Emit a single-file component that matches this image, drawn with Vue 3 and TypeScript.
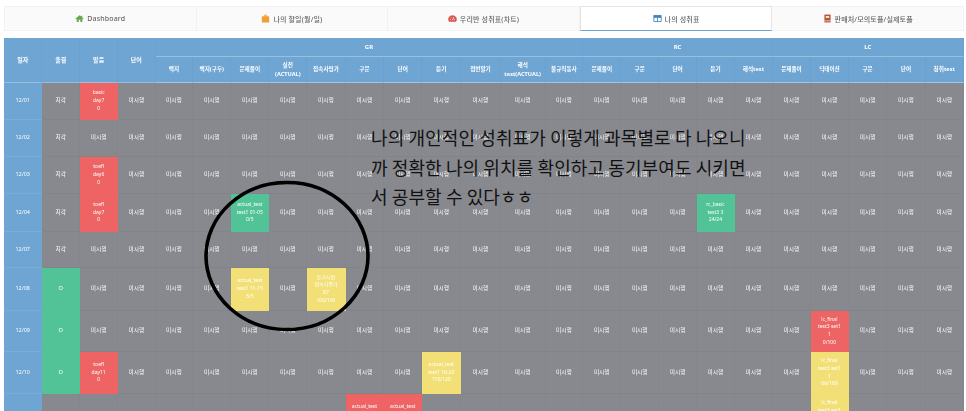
<script setup lang="ts">
interface Cell { text: string; tone: string }
interface Row { date: string; height: number; cells: Cell[] }
interface Head { label: string; cls: string }

const tabs = [
  { key: 'home', label: 'Dashboard', active: false },
  { key: 'case', label: '나의 할일(월/일)', active: false },
  { key: 'gauge', label: '우리반 성취표(차트)', active: false },
  { key: 'table', label: '나의 성취표', active: true },
  { key: 'book', label: '판매처/모의토플/실제토플', active: false },
]

const topHeads: Head[] = [
  { label: '일자', cls: 'rs' },
  { label: '출결', cls: 'rs' },
  { label: '발음', cls: 'rs' },
  { label: '단어', cls: 'rs' },
  { label: 'GR', cls: 'cs11 group' },
  { label: 'RC', cls: 'cs5 group' },
  { label: 'LC', cls: 'cs5 group' },
]

const subHeads = [
  '백지', '백지(구두)', '문제풀이', '실전\n(ACTUAL)', '접속사평가', '구문', '단어', '듣기', '접번발기', '해석\ntest(ACTUAL)', '불규칙동사',
  '문제풀이', '구문', '단어', '듣기', '해석test',
  '문제풀이', '딕테이션', '구문', '단어', '청취test',
]

function makeRow(date: string, height: number, attend: string, special: Record<number, [string, string]>): Row {
  const cells: Cell[] = []
  for (let i = 1; i < 25; i++) {
    if (special[i]) cells.push({ text: special[i][0], tone: special[i][1] + ' filled' })
    else if (i === 1) cells.push({ text: attend, tone: attend === 'O' ? 'green' : 'gray' })
    else cells.push({ text: '미시행', tone: 'gray' })
  }
  return { date, height, cells }
}

const rows: Row[] = [
  makeRow('12/01', 37, '지각', { 2: ['basic\nday7\n0', 'red'] }),
  makeRow('12/02', 37, '지각', {}),
  makeRow('12/03', 37, '지각', { 2: ['toefl\nday6\n0', 'red'] }),
  makeRow('12/04', 38, '지각', {
    2: ['toefl\nday7\n0', 'red'],
    6: ['actual_test\ntest1 01-05\n0/5', 'green'],
    18: ['rc_basic\ntest3 3\n24/24', 'green'],
  }),
  makeRow('12/07', 36, '지각', {}),
  makeRow('12/08', 43, 'O', {
    6: ['actual_test\ntest1 11-15\n5/5', 'yellow'],
    8: ['듣기시험\n접속사평가\n87\n100/100', 'yellow'],
  }),
  makeRow('12/09', 41, 'O', { 21: ['lc_final\ntest3 set1\n1\n0/100', 'red'] }),
  makeRow('12/10', 42, 'O', {
    2: ['toefl\nday11\n0', 'red'],
    11: ['actual_test\ntest1 16-20\n110/120', 'yellow'],
    21: ['lc_final\ntest3 set1\n1\n66/100', 'yellow'],
  }),
  makeRow('12/11', 42, 'O', {
    9: ['actual_test\ntest1 21-25\n0/5', 'red'],
    10: ['actual_test\ntest1 26-30\n0/5', 'red'],
    21: ['lc_final\ntest3 set1\n1\n84/100', 'yellow'],
  }),
]
rows[8].cells[0] = { text: '미시행', tone: 'gray' }
</script>

<template>
  <div class="page">
    <nav class="tabs">
      <a v-for="tab in tabs" :key="tab.key" class="tab" :class="{ active: tab.active }">
        <svg v-if="tab.key === 'home'" class="icon" viewBox="0 0 16 16">
          <path fill="#6aa84f" d="M8 2 .6 8.4l1 1.1L3 8.3V14h3.600v-3.600h2.800V14H13V8.300l1.400 1.200 1-1.100L13 6.300V3h-2v1.600z" />
        </svg>
        <svg v-else-if="tab.key === 'case'" class="icon" viewBox="0 0 16 16">
          <path fill="#f0a030" d="M5.500 1.500h5V4h2.500A1.500 1.500 0 0 1 14.500 5.500V14a1 1 0 0 1-1 1h-11a1 1 0 0 1-1-1V5.500A1.500 1.500 0 0 1 3 4h2.500zM6.800 2.800V4h2.400V2.800z" />
        </svg>
        <svg v-else-if="tab.key === 'gauge'" class="icon" viewBox="0 0 16 16">
          <path fill="#d9534f" d="M8 2a7.500 7.500 0 0 0-6.500 11.200c.2.300.5.500.9.500h11.200c.4 0 .7-.2.900-.5A7.500 7.500 0 0 0 8 2z" />
          <path stroke="#fff" stroke-width="1.400" fill="none" d="M8 11 10.500 5.500M3.500 10h1.500M11 10h1.500M5 5.800l1 1" />
        </svg>
        <svg v-else-if="tab.key === 'table'" class="icon" viewBox="0 0 16 16">
          <path fill="none" stroke="#3f82bd" stroke-width="1.500" d="M1.500 2.500h13v11h-13zM1.500 6h13M8 6v7.500" />
          <path fill="#3f82bd" d="M1.500 2.500h13V6h-13z" />
        </svg>
        <svg v-else class="icon" viewBox="0 0 16 16">
          <path fill="#b9533a" d="M2.500 1h11v14h-11z" />
          <path fill="#fbe3d6" d="M5 3.500h6v3.500H5zM2.500 11.500h11V13h-11z" />
        </svg>
        <span>{{ tab.label }}</span>
      </a>
    </nav>

    <section class="board">
      <div v-for="h in topHeads" :key="h.label" class="head" :class="h.cls">{{ h.label }}</div>
      <div v-for="(s, i) in subHeads" :key="i" class="head sub">{{ s }}</div>
      <template v-for="row in rows" :key="row.date">
        <div class="cell date" :style="{ height: row.height + 'px' }">{{ row.date }}</div>
        <div v-for="(c, i) in row.cells" :key="i" class="cell" :class="c.tone">{{ c.text }}</div>
      </template>
    </section>

    <svg class="ring" viewBox="0 0 170 154">
      <ellipse cx="85" cy="77" rx="81" ry="73.500" fill="none" stroke="#000" stroke-width="3.600" />
    </svg>
    <p class="note">
      <span>나의 개인적인 성취표가 이렇게 과목별로 다 나오니</span>
      <span>까 정확한 나의 위치를 확인하고 동기부여도 시키면</span>
      <span>서 공부할 수 있다ㅎㅎ</span>
    </p>
  </div>
</template>

<style scoped>
.page {
  position: relative;
  width: 966px;
  height: 411px;
  overflow: hidden;
  background: #fff;
  font-family: "Noto Sans", "Noto Sans CJK KR", sans-serif;
}
.tabs {
  display: flex;
  padding: 6px 2px 0 4px;
  height: 31px;
  box-sizing: border-box;
  filter: blur(0.3px);
}
.tab {
  flex: 1;
  display: flex;
  align-items: center;
  justify-content: center;
  gap: 3px;
  background: #fafafa;
  border: 1px solid #f2f2f2;
  border-left-width: 0;
  font-size: 7px;
  font-weight: 500;
  letter-spacing: 0.15px;
  color: #666;
}
.tab:first-child {
  border-left-width: 1px;
}
.tab.active {
  background: #fff;
  border: 1px solid #e4e4e4;
  border-bottom: 1px solid #6fa5d3;
  height: 25px;
  box-sizing: border-box;
}
.icon {
  width: 9px;
  height: 9px;
  flex: none;
}
.board {
  display: grid;
  grid-template-columns:
    38.300px 38px 37.700px 37.700px 37.600px 38px 38px 38px 38.400px 38.600px 38px 39px 39.400px 45px 37.600px
    38px 38px 37.700px 38px 38px 38px 38px 38.300px 38.400px 38.300px;
  grid-template-rows: 19px 26px;
  margin: 7px 0 0 4px;
  width: 960px;
  filter: blur(0.35px);
}
.head {
  display: flex;
  align-items: center;
  justify-content: center;
  text-align: center;
  white-space: pre-line;
  background: #6fa5d3;
  color: #fff;
  font-size: 6px;
  font-weight: 700;
  line-height: 8.500px;
  box-sizing: border-box;
  border-right: 1px solid #6aa1d0;
  border-bottom: 1px solid #96bfe0;
}
.head.rs {
  grid-row: span 2;
}
.head.cs11 {
  grid-column: span 11;
}
.head.cs5 {
  grid-column: span 5;
}
.head.sub {
  font-size: 5.600px;
  border-bottom-color: #a4c7e4;
}
.cell {
  display: flex;
  align-items: center;
  justify-content: center;
  text-align: center;
  white-space: pre-line;
  color: #fff;
  font-size: 5.700px;
  line-height: 7.700px;
  box-sizing: border-box;
  border-right: 1px solid #85868b;
  border-bottom: 1px solid #838489;
}
.cell.date {
  background: #6fa5d3;
  border-right-color: #6fa5d3;
  border-bottom-color: #79acd7;
  font-size: 5.400px;
}
.cell.gray {
  background: #88898e;
}
.cell.filled {
  font-size: 5px;
}
.cell.red {
  background: #ee6464;
  border-color: #ee6464;
}
.cell.green {
  background: #52c397;
  border-color: #52c397;
}
.cell.yellow {
  background: #f2e077;
  border-color: #f2e077;
}
.ring {
  position: absolute;
  left: 202px;
  top: 179px;
  width: 170px;
  height: 154px;
}
.note {
  position: absolute;
  left: 371px;
  top: 123px;
  margin: 0;
  color: #111;
  font-family: "Noto Sans CJK KR", sans-serif;
  font-size: 18px;
  font-weight: 400;
  letter-spacing: 0.1px;
  line-height: 29.700px;
  white-space: nowrap;
}
.note span {
  display: block;
}
</style>
